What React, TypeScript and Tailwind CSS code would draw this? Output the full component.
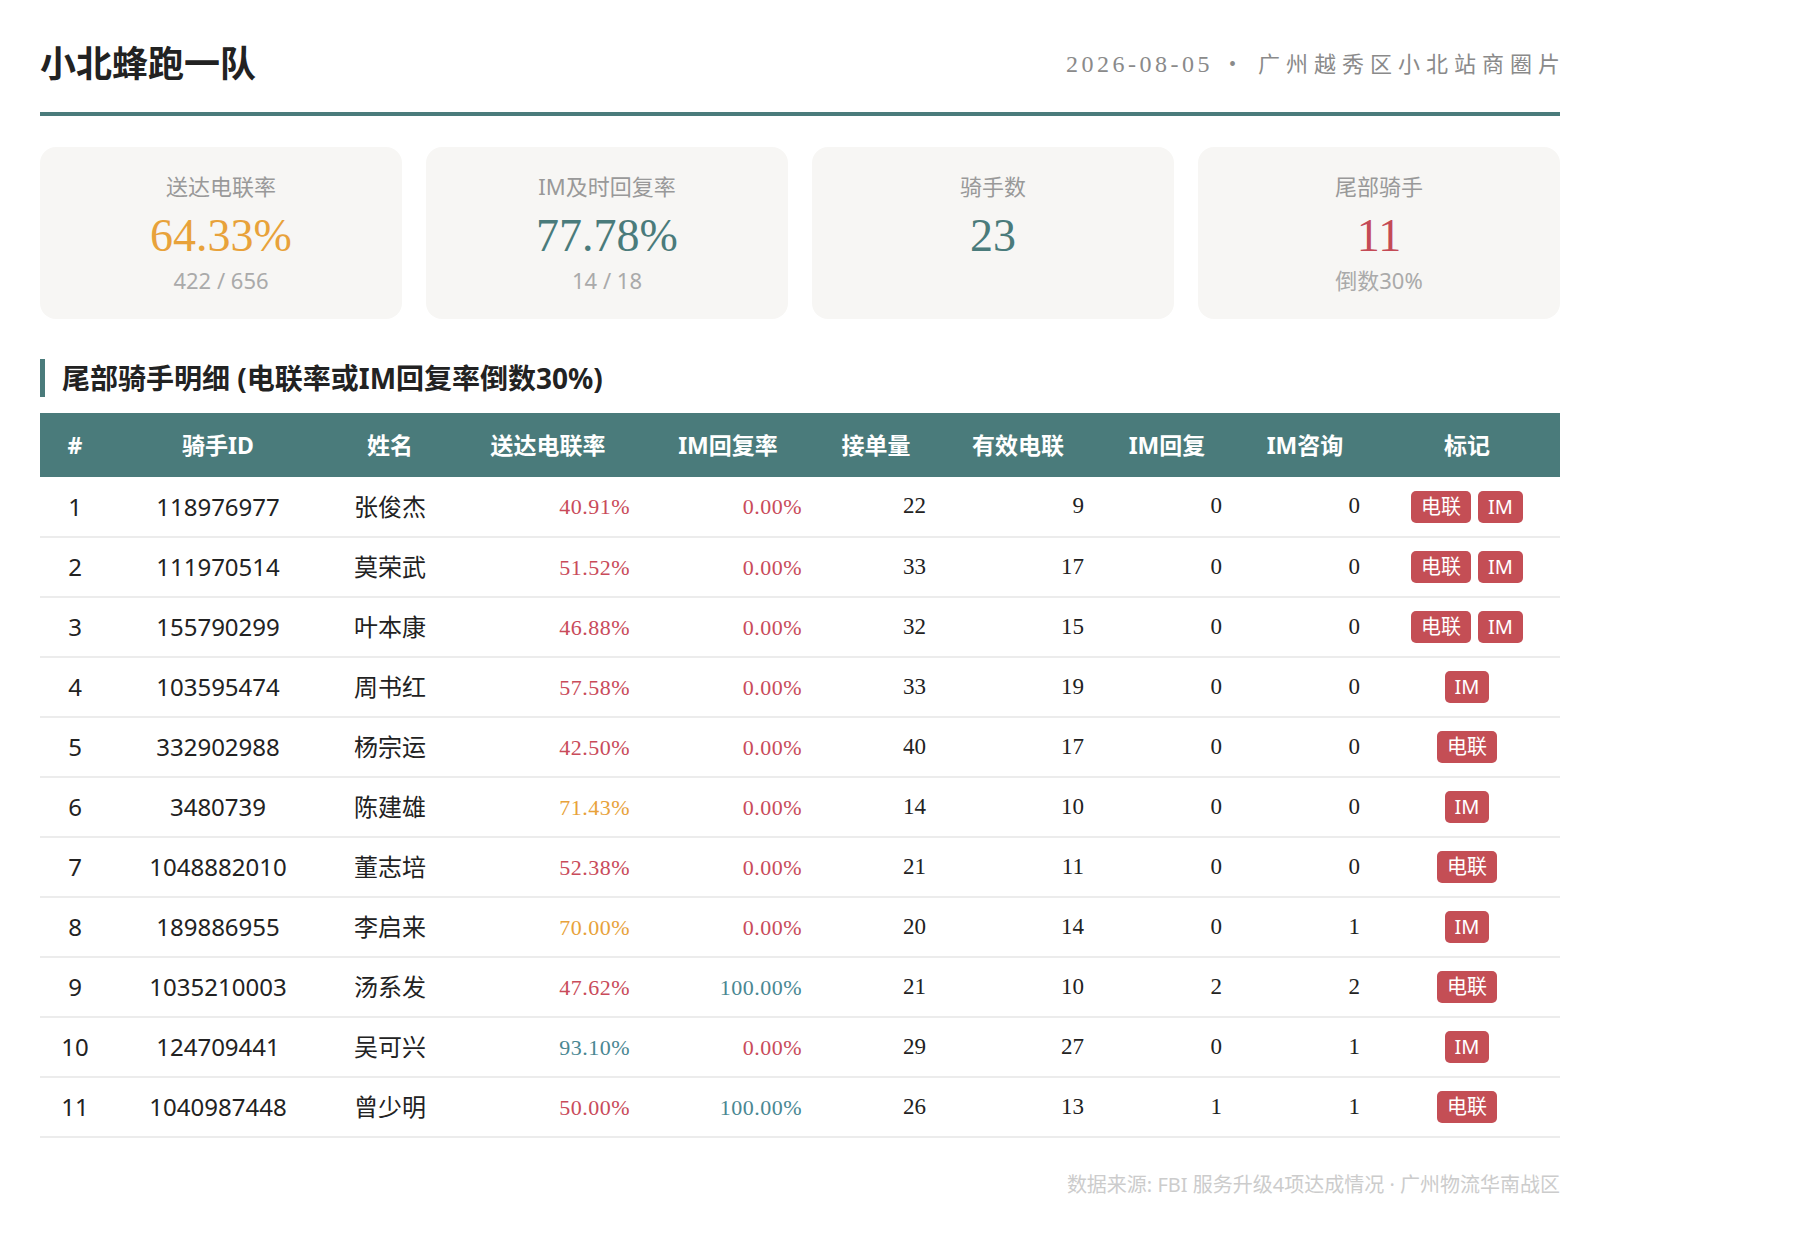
const SANS = "font-['Noto_Sans','Noto_Sans_CJK_SC',sans-serif]";

type Rider = {
  id: string;
  name: string;
  rate: string;
  im: string;
  orders: number;
  valid: number;
  imReply: number;
  imAsk: number;
  tags: string[];
};

const riders: Rider[] = [
  { id: "118976977", name: "张俊杰", rate: "40.91%", im: "0.00%", orders: 22, valid: 9, imReply: 0, imAsk: 0, tags: ["电联", "IM"] },
  { id: "111970514", name: "莫荣武", rate: "51.52%", im: "0.00%", orders: 33, valid: 17, imReply: 0, imAsk: 0, tags: ["电联", "IM"] },
  { id: "155790299", name: "叶本康", rate: "46.88%", im: "0.00%", orders: 32, valid: 15, imReply: 0, imAsk: 0, tags: ["电联", "IM"] },
  { id: "103595474", name: "周书红", rate: "57.58%", im: "0.00%", orders: 33, valid: 19, imReply: 0, imAsk: 0, tags: ["IM"] },
  { id: "332902988", name: "杨宗运", rate: "42.50%", im: "0.00%", orders: 40, valid: 17, imReply: 0, imAsk: 0, tags: ["电联"] },
  { id: "3480739", name: "陈建雄", rate: "71.43%", im: "0.00%", orders: 14, valid: 10, imReply: 0, imAsk: 0, tags: ["IM"] },
  { id: "1048882010", name: "董志培", rate: "52.38%", im: "0.00%", orders: 21, valid: 11, imReply: 0, imAsk: 0, tags: ["电联"] },
  { id: "189886955", name: "李启来", rate: "70.00%", im: "0.00%", orders: 20, valid: 14, imReply: 0, imAsk: 1, tags: ["IM"] },
  { id: "1035210003", name: "汤系发", rate: "47.62%", im: "100.00%", orders: 21, valid: 10, imReply: 2, imAsk: 2, tags: ["电联"] },
  { id: "124709441", name: "吴可兴", rate: "93.10%", im: "0.00%", orders: 29, valid: 27, imReply: 0, imAsk: 1, tags: ["IM"] },
  { id: "1040987448", name: "曾少明", rate: "50.00%", im: "100.00%", orders: 26, valid: 13, imReply: 1, imAsk: 1, tags: ["电联"] },
];

// colour by threshold
function rateColor(v: string) {
  const n = parseFloat(v);
  if (n >= 90) return "text-[#4a8792]";
  if (n >= 70) return "text-[#e8a23a]";
  return "text-[#c94b5a]";
}

function StatCard({ label, value, sub, color }: { label: string; value: string; sub?: string; color: string }) {
  return (
    <div className="flex flex-col items-center rounded-2xl bg-[#f7f6f4] pt-6 pb-[23px]">
      <div className="text-[22px] leading-[31px] text-[#999999]">{label}</div>
      <div className={`mt-[9px] font-['Liberation_Serif',serif] text-[46px] leading-[50px] ${color}`}>{value}</div>
      {sub && <div className="mt-[4px] text-[22px] leading-[31px] text-[#aaaaaa]">{sub}</div>}
    </div>
  );
}

const headers = ["#", "骑手ID", "姓名", "送达电联率", "IM回复率", "接单量", "有效电联", "IM回复", "IM咨询", "标记"];
const widths = ["w-[70px]", "w-[216px]", "w-[128px]", "w-[188px]", "w-[172px]", "w-[124px]", "w-[160px]", "w-[138px]", "w-[138px]", "w-[186px]"];

export default function App() {
  return (
    <div className={`min-h-screen bg-white ${SANS}`}>
      <div className="w-[1600px] px-10 pt-10 pb-10">
        <header className="flex h-12 items-center justify-between">
          <h1 className="text-[36px] font-bold leading-[48px] text-[#222222]">小北蜂跑一队</h1>
          <div className="flex items-center font-['Liberation_Serif','Noto_Sans_CJK_SC',serif] text-[#8a8a8a]">
            <span className="text-[24px] tracking-[3.5px]">2026-08-05</span>
            <span className="ml-4 mr-[22px] text-[20px]">•</span>
            <span className="mr-[-6px] text-[22px] tracking-[6px]">广州越秀区小北站商圈片</span>
          </div>
        </header>
        <div className="mt-6 h-1 bg-[#4a7b7b]" />

        <div className="mt-[31px] grid grid-cols-4 gap-6">
          <StatCard label="送达电联率" value="64.33%" sub="422 / 656" color="text-[#e8a23a]" />
          <StatCard label="IM及时回复率" value="77.78%" sub="14 / 18" color="text-[#4a7b7b]" />
          <StatCard label="骑手数" value="23" color="text-[#4a7b7b]" />
          <StatCard label="尾部骑手" value="11" sub="倒数30%" color="text-[#c44a55]" />
        </div>

        <h2 className="mt-10 border-l-[5px] border-[#4a7b7b] pl-[17px] text-[28px] font-bold leading-[38px] text-[#222222]">
          尾部骑手明细 (电联率或IM回复率倒数30%)
        </h2>

        <table className="mt-4 w-[1520px] table-fixed border-collapse">
          <thead>
            <tr className="h-16 bg-[#4a7b7b] text-white">
              {headers.map((h, i) => (
                <th key={h} className={`${widths[i]} px-3.5 text-center text-[23px] font-bold`}>
                  {h}
                </th>
              ))}
            </tr>
          </thead>
          <tbody>
            {riders.map((r, i) => (
              <tr key={r.id} className="h-[60px] border-b-2 border-[#ececec] text-[#222222]">
                <td className="px-3.5 text-center text-[24px]">{i + 1}</td>
                <td className="px-3.5 text-center text-[24px]">{r.id}</td>
                <td className="px-3.5 text-center text-[24px]">{r.name}</td>
                <td className={`px-3 text-right font-['Liberation_Serif',serif] text-[22px] tracking-[0.5px] ${rateColor(r.rate)}`}>{r.rate}</td>
                <td className={`px-3 text-right font-['Liberation_Serif',serif] text-[22px] tracking-[0.5px] ${rateColor(r.im)}`}>{r.im}</td>
                <td className="px-3 text-right font-['Liberation_Serif',serif] text-[23px]">{r.orders}</td>
                <td className="px-3.5 text-right font-['Liberation_Serif',serif] text-[23px]">{r.valid}</td>
                <td className="px-3.5 text-right font-['Liberation_Serif',serif] text-[23px]">{r.imReply}</td>
                <td className="px-3.5 text-right font-['Liberation_Serif',serif] text-[23px]">{r.imAsk}</td>
                <td className="px-2 text-center">
                  <div className="flex justify-center gap-[7px]">
                    {r.tags.map((t) => (
                      <span key={t} className="rounded-[5px] bg-[#c44e55] px-[10px] text-[20px] leading-8 text-white">
                        {t}
                      </span>
                    ))}
                  </div>
                </td>
              </tr>
            ))}
          </tbody>
        </table>

        <div className="mt-[33px] w-[1520px] text-right text-[20px] leading-7 text-[#cccccc]">
          数据来源: FBI 服务升级4项达成情况 · 广州物流华南战区
        </div>
      </div>
    </div>
  );
}
